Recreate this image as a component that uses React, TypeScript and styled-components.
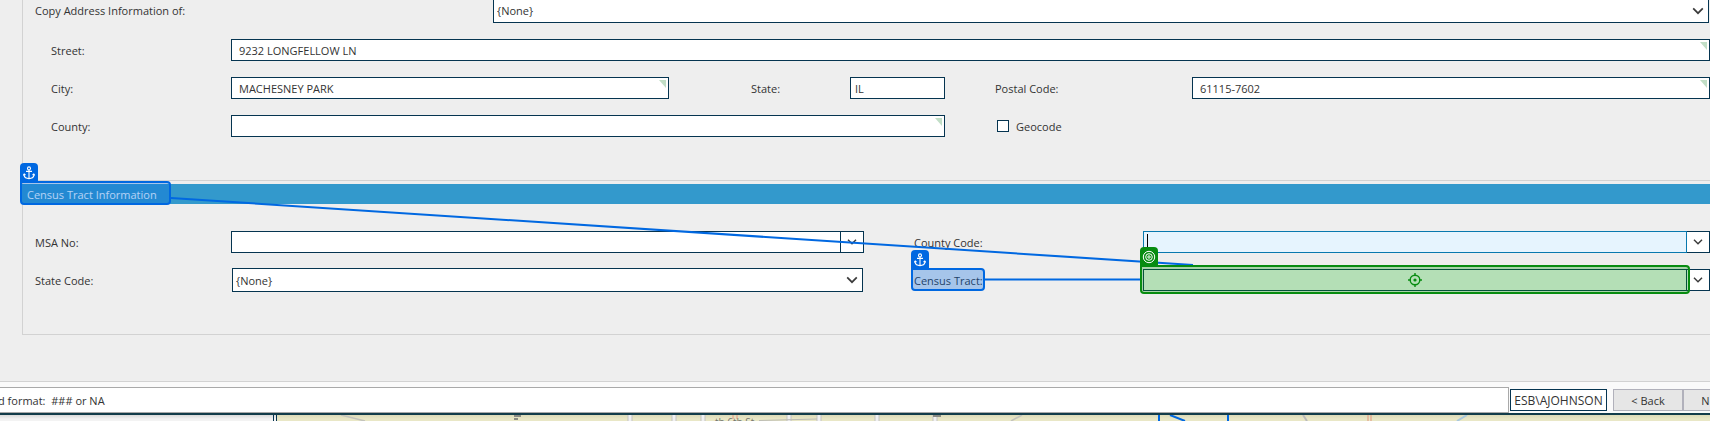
import React from "react";
import styled, { createGlobalStyle, css } from "styled-components";

const NAVY = "#053450";
const BLUE = "#0068e1";
const GREEN = "#078c10";

const Global = createGlobalStyle`
  *, *::before, *::after { box-sizing: border-box; }
  body { margin: 0; background: #eeeeee; overflow-x: hidden; }
  body, input, select, button {
    font-family: "Open Sans", "Noto Sans", sans-serif;
    font-size: 11px;
    line-height: 16px;
    color: #333;
  }
`;

const Page = styled.div`
  display: flex;
  flex-direction: column;
  min-height: 100vh;
  overflow: hidden;
`;

const Panels = styled.main`
  padding: 0 0 46px 22px;
`;

const AddressPanel = styled.section`
  border-left: 1px solid #d2d2d2;
  padding-bottom: 43px;
`;

const AddressGrid = styled.div`
  display: grid;
  grid-template-columns: 180px minmax(0, 438fr) 82px 99px 95px 50px 197px minmax(0, 518fr);
  grid-auto-rows: 22px;
  row-gap: 16px;
  align-items: center;
  margin-top: 16px;
  padding-left: 28px;
`;

const CopyRow = styled.div`
  display: flex;
  align-items: flex-start;
  height: 23px;
  padding: 0 1px 0 12px;
`;

const Label = styled.label<{ $width?: number; $start?: number }>`
  position: relative;
  padding-top: 1px;
  white-space: nowrap;
  ${(p) => p.$width && css`flex: 0 0 ${p.$width}px; padding-top: 3px;`}
  ${(p) => p.$start && css`grid-column-start: ${p.$start};`}
`;

const Field = styled.div<{ $from: number; $to: number; $marked?: boolean }>`
  position: relative;
  display: flex;
  height: 22px;
  grid-column: ${(p) => p.$from} / ${(p) => p.$to};
  ${(p) => p.$marked && css`
    &::after {
      content: "";
      position: absolute;
      top: 3px;
      right: 3px;
      border-style: solid;
      border-width: 0 7px 8px 0;
      border-color: transparent #c1dec6 transparent transparent;
    }
  `}
`;

const TextInput = styled.input<{ $pad?: number; $active?: boolean }>`
  flex: 1;
  min-width: 0;
  width: 100%;
  height: 22px;
  margin: 0;
  padding: 1px 4px 0 ${(p) => p.$pad ?? 7}px;
  border: 1px solid ${(p) => (p.$active ? "#0878ae" : NAVY)};
  border-radius: 0;
  background: ${(p) => (p.$active ? "#e6f4fe" : "#fff")};
  outline: none;
`;

const DropButton = styled.button`
  display: flex;
  align-items: center;
  justify-content: center;
  flex: 0 0 23px;
  height: 22px;
  padding: 0;
  border: 1px solid ${NAVY};
  border-left: 0;
  background: #fff;
`;

const SelectWrap = styled.div<{ $cut?: boolean }>`
  position: relative;
  flex: 1;
  min-width: 0;
  height: ${(p) => (p.$cut ? 23 : 24)}px;
  select {
    appearance: none;
    display: block;
    width: 100%;
    height: 100%;
    margin: 0;
    padding: ${(p) => (p.$cut ? 0 : 1)}px 24px 0 3px;
    border: 1px solid ${NAVY};
    border-top-width: ${(p) => (p.$cut ? 0 : 1)}px;
    border-radius: 0;
    background: #fff;
    outline: none;
  }
  svg {
    position: absolute;
    top: ${(p) => (p.$cut ? 5 : 6)}px;
    right: 5px;
    pointer-events: none;
  }
`;

const SelectCell = styled.div`
  display: flex;
  padding: 0 1px;
`;

const CheckLabel = styled.label`
  grid-column: 7 / 9;
  display: flex;
  align-items: center;
  gap: 7px;
  padding-left: 2px;
  span { padding-top: 1px; }
`;

const Checkbox = styled.input`
  appearance: none;
  width: 12px;
  height: 12px;
  margin: 0;
  border: 1px solid ${NAVY};
  background: #fff;
`;

const CensusPanel = styled.section`
  position: relative;
  height: 155px;
  border: 1px solid #d2d2d2;
  border-right: 0;
  padding-top: 3px;
`;

const SectionTitle = styled.h2`
  position: relative;
  height: 20px;
  margin: 0 0 0 -1px;
  padding: 3px 0 0 5px;
  background: #3399cc;
  color: #fff;
  font-size: 11px;
  font-weight: 400;
  line-height: 16px;
`;

const CensusGrid = styled.div`
  display: grid;
  grid-template-columns: 196px minmax(0, 633fr) 50px 229px minmax(0, 567fr);
  grid-auto-rows: 22px;
  row-gap: 16px;
  align-items: center;
  margin-top: 27px;
  padding-left: 12px;
`;

const Caret = styled.span`
  position: absolute;
  left: 4px;
  top: 3px;
  width: 1px;
  height: 16px;
  background: #000;
`;

const Links = styled.svg`
  position: absolute;
  left: 0;
  top: 0;
  width: 100%;
  height: 153px;
  pointer-events: none;
`;

const Highlight = styled.span<{ $kind: "anchor" | "target"; $inset: string }>`
  position: absolute;
  inset: ${(p) => p.$inset};
  display: flex;
  align-items: center;
  justify-content: center;
  border: 2px solid ${(p) => (p.$kind === "anchor" ? BLUE : GREEN)};
  border-radius: 0 4px 4px 4px;
  background: ${(p) => (p.$kind === "anchor" ? "rgba(0, 104, 225, 0.3)" : "rgba(5, 148, 12, 0.3)")};
  z-index: 1;
`;

const Badge = styled.span<{ $kind: "anchor" | "target" }>`
  position: absolute;
  left: -2px;
  bottom: 100%;
  display: flex;
  align-items: center;
  justify-content: center;
  width: 18px;
  height: 20px;
  border-radius: 4px 4px 0 0;
  background: ${(p) => (p.$kind === "anchor" ? BLUE : GREEN)};
`;

const Footer = styled.footer`
  display: flex;
  align-items: center;
  height: 32px;
  border-top: 1px solid #d2d2d2;
  padding-top: 5px;
  background: #fafafa;
`;

const Status = styled.div`
  flex: 1;
  height: 26px;
  border: 1px solid #a9a9a9;
  border-left: 0;
  padding: 5px 0 0;
  background: #fff;
  white-space: pre;
  text-indent: -2px;
`;

const User = styled.div`
  width: 97px;
  height: 22px;
  margin: 0 6px 0 1px;
  border: 1px solid ${NAVY};
  background: #fff;
  font-size: 12px;
  line-height: 21px;
  text-align: center;
`;

const NavButtons = styled.div`
  display: flex;
  width: 97px;
  overflow: hidden;
`;

const NavButton = styled.button`
  flex: 0 0 70px;
  height: 22px;
  margin: 0;
  padding: 1px 0 0;
  border: 1px solid #b1b1bb;
  background: #e6e6e6;
`;

const MapStrip = styled.div`
  display: flex;
  flex: 1;
  min-height: 8px;
  border-top: 2px solid #123c4a;
  background: linear-gradient(#dcdab8, #e9e7c6 4px);
`;

const MapSide = styled.div`
  width: 277px;
  border-right: 4px double ${NAVY};
  background: linear-gradient(#d9d9d9, #f3f3f3 4px);
`;

const MapDrawing = styled.svg`
  flex: 1;
  min-width: 0;
  height: 6px;
`;

const Chevron = ({ size = 12 }: { size?: number }) => (
  <svg width={size} height={size} viewBox="0 0 12 12" fill="none" stroke="#3b3b3b" strokeWidth="1.7">
    <path d="M1.2 3.4 6 8.2 10.8 3.4" />
  </svg>
);

const AnchorIcon = () => (
  <svg width="12" height="14" viewBox="0 0 12 14" fill="none" stroke="#fff" strokeWidth="1.1">
    <circle cx="6" cy="2.4" r="1.5" />
    <path d="M6 4v8.4M3 5.4h6M1 8v1.2C1.4 11.4 3.4 12.6 6 12.6s4.6-1.2 5-3.4V8M.2 9.4 1.2 8l1.3 1M11.8 9.4 10.8 8l-1.3 1" />
  </svg>
);

const TargetIcon = () => (
  <svg width="14" height="14" viewBox="0 0 14 14" fill="none" stroke="#fff" strokeWidth="1">
    <circle cx="7" cy="7" r="5.7" />
    <circle cx="7" cy="7" r="3.3" />
    <circle cx="7" cy="7" r="1.2" />
  </svg>
);

const Crosshair = () => (
  <svg width="14" height="14" viewBox="0 0 14 14" fill="none" stroke={GREEN} strokeWidth="1.4">
    <circle cx="7" cy="7" r="4.8" />
    <circle cx="7" cy="7" r="1.6" fill={GREEN} stroke="none" />
    <path d="M7 0v3M7 11v3M0 7h3M11 7h3" />
  </svg>
);

export default function App() {
  return (
    <Page>
      <Global />
      <Panels>
        <AddressPanel>
          <CopyRow>
            <Label htmlFor="copy" $width={458}>Copy Address Information of:</Label>
            <SelectWrap $cut>
              <select id="copy"><option>{"{None}"}</option></select>
              <Chevron />
            </SelectWrap>
          </CopyRow>
          <AddressGrid>
            <Label htmlFor="street">Street:</Label>
            <Field $from={2} $to={9} $marked>
              <TextInput id="street" defaultValue="9232 LONGFELLOW LN" />
            </Field>
            <Label htmlFor="city">City:</Label>
            <Field $from={2} $to={3} $marked>
              <TextInput id="city" defaultValue="MACHESNEY PARK" />
            </Field>
            <Label htmlFor="state" $start={4}>State:</Label>
            <Field $from={5} $to={6}>
              <TextInput id="state" defaultValue="IL" $pad={4} />
            </Field>
            <Label htmlFor="postal" $start={7}>Postal Code:</Label>
            <Field $from={8} $to={9} $marked>
              <TextInput id="postal" defaultValue="61115-7602" />
            </Field>
            <Label htmlFor="county">County:</Label>
            <Field $from={2} $to={6} $marked>
              <TextInput id="county" />
            </Field>
            <CheckLabel>
              <Checkbox type="checkbox" />
              <span>Geocode</span>
            </CheckLabel>
          </AddressGrid>
        </AddressPanel>

        <CensusPanel>
          <SectionTitle>
            Census Tract Information
            <Highlight $kind="anchor" $inset="-3px calc(100% - 149px) -1px -2px">
              <Badge $kind="anchor"><AnchorIcon /></Badge>
            </Highlight>
          </SectionTitle>
          <CensusGrid>
            <Label htmlFor="msa">MSA No:</Label>
            <Field $from={2} $to={3}>
              <TextInput id="msa" />
              <DropButton type="button" aria-label="Open MSA list"><Chevron size={10} /></DropButton>
            </Field>
            <Label htmlFor="countyCode" $start={4}>County Code:</Label>
            <Field $from={5} $to={6}>
              <TextInput id="countyCode" $active />
              <Caret />
              <DropButton type="button" aria-label="Open county list"><Chevron size={10} /></DropButton>
            </Field>
            <Label htmlFor="stateCode">State Code:</Label>
            <SelectCell>
              <SelectWrap>
                <select id="stateCode"><option>{"{None}"}</option></select>
                <Chevron />
              </SelectWrap>
            </SelectCell>
            <Label htmlFor="tract" $start={4}>
              Census Tract:
              <Highlight $kind="anchor" $inset="-4px 158px -2px -3px">
                <Badge $kind="anchor"><AnchorIcon /></Badge>
              </Highlight>
            </Label>
            <Field $from={5} $to={6}>
              <TextInput id="tract" />
              <DropButton type="button" aria-label="Open tract list"><Chevron size={10} /></DropButton>
              <Highlight $kind="target" $inset="-4px 20px -3px -3px">
                <Badge $kind="target"><TargetIcon /></Badge>
                <Crosshair />
              </Highlight>
            </Field>
          </CensusGrid>
          <Links viewBox="0 0 1687 153" preserveAspectRatio="none" fill="none" stroke={BLUE} strokeWidth="2">
            <path d="M148 17 1170 84M962 98.5H1117" vectorEffect="non-scaling-stroke" />
          </Links>
        </CensusPanel>
      </Panels>

      <Footer>
        <Status>{"d format:  ### or NA"}</Status>
        <User>ESB\AJOHNSON</User>
        <NavButtons>
          <NavButton type="button">&lt; Back</NavButton>
          <NavButton type="button">Next &gt;</NavButton>
        </NavButtons>
      </Footer>

      <MapStrip>
        <MapSide />
        <MapDrawing viewBox="0 0 1433 6" preserveAspectRatio="xMinYMin slice" fill="none">
          <path d="M64 0 88 6M734 6 745 0" stroke="#c3c3bb" strokeWidth="1.5" />
          <path d="M353 0v6M397 0v6M426 0v6M512 0v6M542 0v6M600 0v6M658 0v6" stroke="#c3c3c3" strokeWidth="5" />
          <path d="M353 0v6M397 0v6M426 0v6M512 0v6M542 0v6M600 0v6M658 0v6" stroke="#f1f1f1" strokeWidth="3" />
          <path d="M456 0v4M460 0v4M1091 0v6M1094 0v6" stroke="#e3b094" strokeWidth="1.5" />
          <path d="M482 5.5 540 4" stroke="#bcbcb4" />
          <path d="M237 1h7M237 4h4M656 1h8" stroke="#8b8b84" strokeWidth="2" />
          <path d="M882 0v6M951 0v6M893 0 908 6" stroke={BLUE} strokeWidth="2" />
          <path d="M1180 6 1190 0" stroke="#a9c8dc" strokeWidth="2" />
          <path d="M1026 0 1030 6" stroke="#bababa" strokeWidth="2" />
          <text x="438" y="11" fill="#77776f" fontSize="10">th 6th St</text>
        </MapDrawing>
      </MapStrip>
    </Page>
  );
}
